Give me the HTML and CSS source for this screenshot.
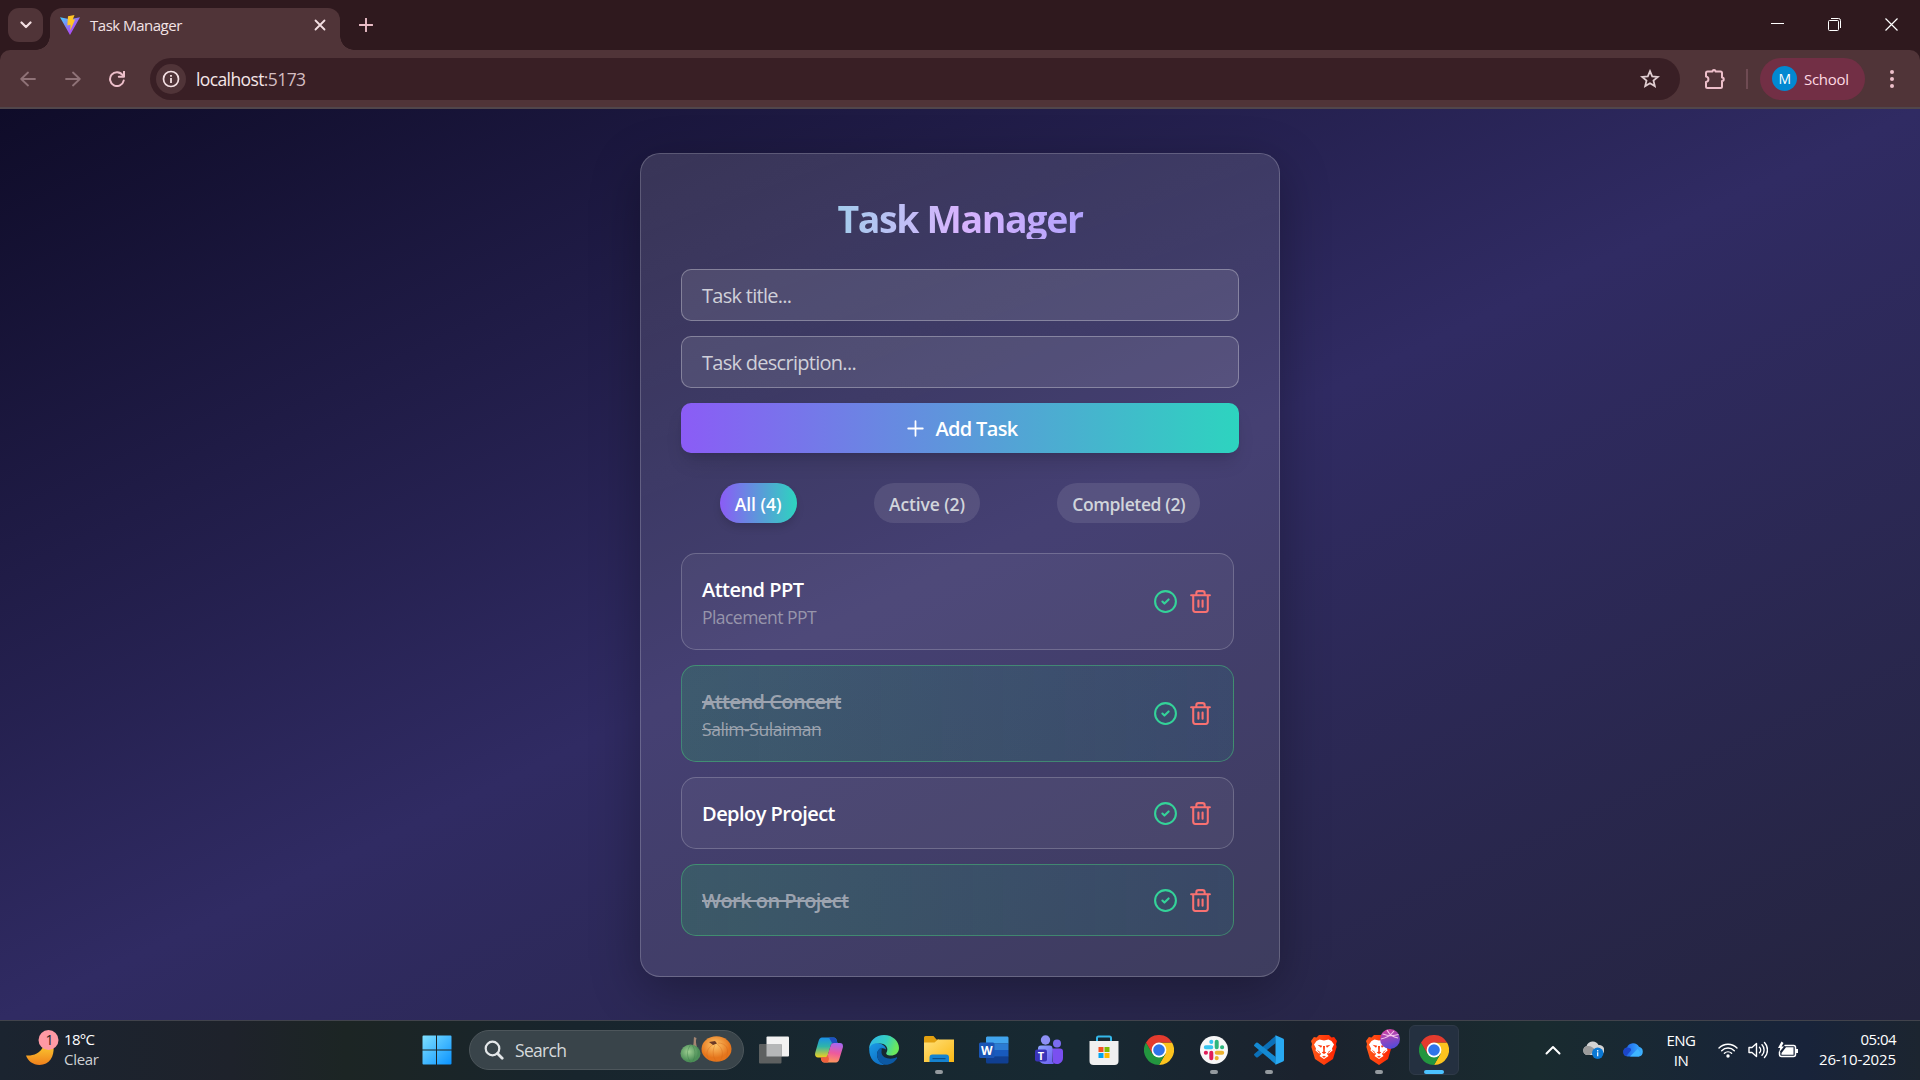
FILE: index.html
```html
<!DOCTYPE html>
<html lang="en">
<head>
<meta charset="utf-8">
<title>Task Manager</title>
<link rel="stylesheet" href="styles.css">
</head>
<body>
<svg width="0" height="0" class="defs">
  <defs>
    <linearGradient id="vite-a" x1="0" y1="0" x2="1" y2="1"><stop offset="0" stop-color="#41d1ff"/><stop offset=".6" stop-color="#a05cf5"/><stop offset="1" stop-color="#bd34fe"/></linearGradient>
    <linearGradient id="win" x1="0" y1="0" x2="1" y2="1"><stop offset="0" stop-color="#7fe0ff"/><stop offset="1" stop-color="#0a93ff"/></linearGradient>
    <linearGradient id="moon" x1="0" y1="0" x2="0" y2="1"><stop offset="0" stop-color="#f9c22e"/><stop offset="1" stop-color="#f0801c"/></linearGradient>
    <linearGradient id="cop-a" x1="0" y1="0" x2="0" y2="1"><stop offset="0" stop-color="#1a8fe8"/><stop offset=".45" stop-color="#2fb5a8"/><stop offset="1" stop-color="#f4d01c"/></linearGradient>
    <linearGradient id="cop-b" x1="0.6" y1="0" x2="0.4" y2="1"><stop offset="0" stop-color="#a767f0"/><stop offset=".5" stop-color="#ee5a9c"/><stop offset="1" stop-color="#ff9a5a"/></linearGradient>
    <linearGradient id="edge-a" x1="0" y1="0" x2="1" y2="0.3"><stop offset="0" stop-color="#2fb3ee"/><stop offset=".6" stop-color="#35cfc0"/><stop offset="1" stop-color="#6be85c"/></linearGradient>
    <linearGradient id="edge-b" x1="0" y1="0" x2="0.6" y2="1"><stop offset="0" stop-color="#1a9be6"/><stop offset="1" stop-color="#0f6fc4"/></linearGradient>
    <linearGradient id="folder" x1="0" y1="0" x2="1" y2="1"><stop offset="0" stop-color="#ffe07a"/><stop offset="1" stop-color="#fbb813"/></linearGradient>
    <linearGradient id="teams" x1="0" y1="0" x2="1" y2="1"><stop offset="0" stop-color="#8fa6ff"/><stop offset="1" stop-color="#6a5cf0"/></linearGradient>
    <linearGradient id="brave" x1="0" y1="0" x2="1" y2="0"><stop offset="0" stop-color="#ff5a1a"/><stop offset="1" stop-color="#ff2200"/></linearGradient>
    <linearGradient id="drib" x1="0" y1="0" x2="0.3" y2="1"><stop offset="0" stop-color="#e0409a"/><stop offset="1" stop-color="#5a4ad8"/></linearGradient>
    <linearGradient id="od" x1="0" y1="0" x2="1" y2="0"><stop offset="0" stop-color="#1f57e0"/><stop offset=".5" stop-color="#2a86f5"/><stop offset="1" stop-color="#3fb6ff"/></linearGradient>
    <radialGradient id="pump" cx=".45" cy=".35"><stop offset="0" stop-color="#ffc76a"/><stop offset="1" stop-color="#e5751c"/></radialGradient>
    <radialGradient id="gourd" cx=".4" cy=".4"><stop offset="0" stop-color="#9fcf92"/><stop offset="1" stop-color="#4d8f58"/></radialGradient>
    <symbol id="chrome" viewBox="0 0 30 30">
      <path d="M15 7.5H28A15 15 0 0 1 15 30l6.5-11.2Z" fill="#fcc31e"/>
      <path d="M8.500 18.800 2 7.500A15 15 0 0 0 15 30l6.500-11.200Z" fill="#23963f"/>
      <path d="M8.500 18.800 2 7.500A15 15 0 0 1 28 7.500H15Z" fill="#e33b2e"/>
      <circle cx="15" cy="15" r="7.400" fill="#fff"/><circle cx="15" cy="15" r="5.800" fill="#2f74ea"/>
    </symbol>
    <symbol id="lion" viewBox="0 0 26 30">
      <path d="M8 0h10l2.500 2.400 2.600-.3L26 6l-1 3 .6 3-3.600 12L13 30 4 24 .4 12 1 9 0 6l2.900-3.900 2.600.300Z" fill="url(#brave)"/>
      <path d="M13 5.500 17.500 4.500 20.500 6l2.500 3.500-2 4 .500 2-3.500 3-1.500-.500-.500 1 1.500 2-4.500 3-4.500-3 1.500-2-.500-1-1.500.500-3.500-3 .500-2-2-4L5.500 6l3-1.500Z" fill="#fff"/>
      <path d="m6.500 9.800 4.700 1-1.200 2Zm13 0-4.700 1 1.200 2ZM12 11h2l-.300 5.500 1.600 1L13 19l-2.300-1.500 1.600-1ZM5.500 14.500l3.500 2.500-.5 1Zm15 0L17 17l.5 1ZM11 21.800l2-1 2 1-2 1Z" fill="#ff3d10"/>
    </symbol>
    <symbol id="check" viewBox="0 0 24 24"><circle cx="12" cy="12" r="10"/><path d="m9 12 2 2 4-4"/></symbol>
    <symbol id="trash" viewBox="0 0 24 24"><path d="M3 6h18M19 6v14a2 2 0 0 1-2 2H7a2 2 0 0 1-2-2V6M8 6V4a2 2 0 0 1 2-2h4a2 2 0 0 1 2 2v2M10 11v6M14 11v6"/></symbol>
  </defs>
</svg>

<header class="browser">
  <div class="tabstrip">
    <div class="tab-search"><svg width="12" height="8" viewBox="0 0 12 8"><path d="m1.500 1.500 4.500 4.500 4.500-4.500" class="ln" stroke="#f3dfe2" stroke-width="2.200"/></svg></div>
    <div class="tab">
      <svg width="20" height="20" viewBox="0 0 20 20"><path d="M0 2.200 10 20 20 2.200 10 4.200Z" fill="url(#vite-a)"/><path d="m8 1.200 6.500-1.200-1.800 4.700 2.500-.4-5 11.500.4-6-3.300.700Z" fill="#ffc524"/></svg>
      <span class="tab-title">Task Manager</span>
      <svg width="12" height="12" viewBox="0 0 12 12"><path d="m1.500 1.500 9 9m0-9-9 9" class="ln" stroke="#f3dfe2" stroke-width="1.800"/></svg>
    </div>
    <svg class="new-tab" width="14" height="14" viewBox="0 0 14 14"><path d="M7 .5v13M.5 7h13" class="ln" stroke="#e9bcc6" stroke-width="1.900"/></svg>
    <div class="win-buttons">
      <svg width="13" height="13" viewBox="0 0 13 13"><path d="M0 5.500h13" stroke="#fff"/></svg>
      <svg width="13" height="13" viewBox="0 0 13 13"><path d="M3 .500h7.500a2 2 0 0 1 2 2V10" fill="none" stroke="#fff"/><rect x=".5" y="2.500" width="10" height="10" rx="1" fill="none" stroke="#fff"/></svg>
      <svg width="13" height="13" viewBox="0 0 13 13"><path d="m.5.5 12 12m0-12-12 12" stroke="#fff" stroke-width="1.200"/></svg>
    </div>
  </div>
  <div class="toolbar">
    <div class="nav">
      <svg width="16" height="16" viewBox="0 0 16 16"><path d="M15 8H1.500M8 1.500 1.200 8 8 14.500" class="ln" stroke="#8f7277" stroke-width="1.800"/></svg>
      <svg width="16" height="16" viewBox="0 0 16 16"><path d="M1 8h13.500M8 1.500l6.800 6.500L8 14.500" class="ln" stroke="#8f7277" stroke-width="1.800"/></svg>
      <svg width="16" height="16" viewBox="0 0 16 16"><path d="M13.500 4A6.900 6.900 0 1 0 14.700 9.600M15 .5v5.200H9.800" class="ln" stroke="#edbfca" stroke-width="2"/></svg>
    </div>
    <div class="omnibox">
      <div class="site-info"><svg width="18" height="18" viewBox="0 0 18 18"><circle cx="9" cy="9" r="7.500" class="ln" stroke="#f3dfe2" stroke-width="1.700"/><path d="M9 8v5M9 5v1.700" stroke="#f3dfe2" stroke-width="1.800"/></svg></div>
      <span class="url">localhost<i>:5173</i></span>
      <svg width="20" height="20" viewBox="0 0 20 20"><path d="m10 2.200 2.200 5.200 5.600.500-4.300 3.700 1.300 5.500L10 14.200l-4.800 2.900 1.300-5.500L2.200 7.900l5.600-.500Z" class="ln mit" stroke="#e0cdd1" stroke-width="1.800"/></svg>
    </div>
    <svg class="puzzle" width="22" height="22" viewBox="0 0 22 22"><path d="M3.500 3.500H8.500a1.500 1.500 0 0 1 3 0h5a1.500 1.500 0 0 1 1.500 1.500v4.500a1.500 1.500 0 0 1 0 3.500v5.500a1.500 1.500 0 0 1-1.500 1.500h-13A1.500 1.500 0 0 1 2 18.500v-4.500c3.200-.5 3.200-5 0-5.500V5a1.500 1.500 0 0 1 1.500-1.500Z" class="ln" stroke="#edbfca" stroke-width="2"/></svg>
    <div class="divider"></div>
    <div class="profile"><span class="avatar">M</span><span>School</span></div>
    <svg width="6" height="20" viewBox="0 0 6 20" fill="#edbfca"><circle cx="3" cy="3" r="2"/><circle cx="3" cy="10" r="2"/><circle cx="3" cy="17" r="2"/></svg>
  </div>
</header>

<main class="page">
  <section class="card">
    <h1>Task Manager</h1>
    <div class="field">Task title...</div>
    <div class="field">Task description...</div>
    <button class="add"><svg width="25" height="25" viewBox="0 0 24 24"><path d="M5 12h14M12 5v14" class="ln" stroke="#fff" stroke-width="1.700"/></svg><span>Add Task</span></button>
    <div class="filters">
      <span class="pill on">All (4)</span>
      <span class="pill active-f">Active (2)</span>
      <span class="pill done-f">Completed (2)</span>
    </div>
    <ul class="list">
      <li class="item"><div><b>Attend PPT</b><p>Placement PPT</p></div><svg class="ok"><use href="#check"/></svg><svg class="del"><use href="#trash"/></svg></li>
      <li class="item done"><div><b>Attend Concert</b><p>Salim-Sulaiman</p></div><svg class="ok"><use href="#check"/></svg><svg class="del"><use href="#trash"/></svg></li>
      <li class="item"><div><b>Deploy Project</b></div><svg class="ok"><use href="#check"/></svg><svg class="del"><use href="#trash"/></svg></li>
      <li class="item done"><div><b>Work on Project</b></div><svg class="ok"><use href="#check"/></svg><svg class="del"><use href="#trash"/></svg></li>
    </ul>
  </section>
</main>

<footer class="taskbar">
  <div class="weather">
    <svg width="34" height="38" viewBox="0 0 34 38"><path d="M1 26.500c7 .5 14-2 17-8.500h10.500c1 9-4 18-14 18C8 36 2.500 31.500 1 26.500Z" fill="url(#moon)"/><circle cx="23.500" cy="11" r="10" fill="#ff99a4"/><text x="20.500" y="16" class="badge-n">1</text></svg>
    <div class="two"><span class="temp">18°C</span><span class="cond">Clear</span></div>
  </div>
  <div class="apps">
    <div class="app start"><svg width="30" height="30" viewBox="0 0 30 30"><path d="M1.500.500H14v14H.500V1.500a1 1 0 0 1 1-1ZM15 .5h13.500a1 1 0 0 1 1 1v13H15ZM.5 15.500H14v14H1.500a1 1 0 0 1-1-1ZM15 15.500h14.500v13a1 1 0 0 1-1 1H15Z" fill="url(#win)"/></svg></div>
    <div class="search">
      <svg width="20" height="20" viewBox="0 0 20 20"><circle cx="8.500" cy="8.500" r="6.800" class="ln" stroke="#e4e7e9" stroke-width="2.200"/><path d="m13.500 13.500 4.700 4.700" class="ln" stroke="#e4e7e9" stroke-width="2.800"/></svg>
      <span>Search</span>
      <svg width="52" height="27" viewBox="0 0 52 27"><path d="M13 10c1-3 .5-6 1-9l2.500 1c-1 3-.5 6 .5 9Z" fill="#a58672"/><ellipse cx="10.500" cy="17.500" rx="10" ry="9" fill="url(#gourd)"/><path d="M10.500 9c-4 5-4 12 0 17M12 9c4 5 4 12 0 17" fill="none" stroke="#3c7f49" stroke-opacity=".4"/><ellipse cx="36.500" cy="13" rx="15" ry="12.700" fill="url(#pump)"/><path d="M34 8c-8 4-9 12-4 17M35 9c-3 6-2 12 1 16M37 8c6 4 7 11 3 17M38 7c8 0 12 6 8 15" fill="none" stroke="#cf641a" stroke-opacity=".35"/><path d="m29 6 6-1 2 2.500-4 1.500Z" fill="#6b3a26"/></svg>
    </div>
    <div class="app first"><svg width="30" height="28" viewBox="0 0 30 28"><rect x="7.500" y=".5" width="22.500" height="20" rx="1" fill="#f2f2f2"/><rect y="8" width="22.500" height="19.500" rx="1" fill="#5d6060"/><path d="M7.500 8h15v12.500h-15Z" fill="#b5b7b8"/></svg></div>
    <div class="app"><svg width="28" height="26" viewBox="0 0 28 26"><path d="M7 .5h11.500c2 0 2.800 1 3.300 3l.7 2.500h-3.500c-2 0-3 1-3.500 3l-2.600 9c-.6 2-1.500 2.500-3.500 2.500H3C.5 20.500-.5 18.500.3 15.500L3.600 4C4.300 1.700 5.300.5 7 .5Z" fill="url(#cop-a)"/><path d="M14 .5h4.500c2 0 2.800 1 3.300 3l.7 2.500H17Z" fill="#1f4fc0"/><path d="M21 25.500H9.500c-2 0-2.800-1-3.300-3l-.5-2h3.700c2 0 3-1 3.500-3l2.600-8.500c.6-2 1.500-3 3.500-3h6c2.500 0 3.500 2 2.700 5L24.400 22c-.7 2.300-1.700 3.500-3.400 3.500Z" fill="url(#cop-b)"/><path d="M5.700 20.500h3.700c2 0 3-1 3.500-3L14 22l-1 3.500H9.500c-2 0-2.800-1-3.300-3Z" fill="#f0603c"/></svg></div>
    <div class="app"><svg width="30" height="30" viewBox="0 0 30 30"><path d="M15 0c9 0 15 6.500 15 13 0 5-4 7.500-8 7.500s-5.500-1.500-4.500-3c2.500-4-.5-9-6.500-9C5 8.500 1 12 .2 14 0 6 7 0 15 0Z" fill="url(#edge-a)"/><path d="M.2 14C1 10 5 7.500 10 8.500c4 .8 7 3 7 6-4-3-9 0-9 5 0 5 3.500 9 8 10.300C7 31 0 24 .2 14Z" fill="url(#edge-b)"/><path d="M12.500 12.500c-3 1-4.500 4-4.500 7 0 5 3.500 9 8 10.300 5 .3 9.500-2.300 12-6.300.5-1-.3-1.500-1-1-5 2.500-14 1-14.500-5-.1-2 .5-3.500 0-5Z" fill="#0c59a4"/></svg></div>
    <div class="app run"><svg width="30" height="27" viewBox="0 0 30 27"><path d="M1.500 0h8l3 3.500H15V8H0V1.500A1.500 1.500 0 0 1 1.500 0Z" fill="#e2a010"/><path d="M0 6.500h10.500L14 3.500h16V26H0Z" fill="url(#folder)"/><path d="M5.500 26v-4.500a3 3 0 0 1 3-3h13.500a3 3 0 0 1 3 3V26Z" fill="#1583d0"/><rect x="8.500" y="22" width="13" height="1.200" fill="#0b4f8a"/></svg></div>
    <div class="app"><svg width="30" height="28" viewBox="0 0 30 28"><path d="M8 .5h20.500A1.500 1.500 0 0 1 29.500 2v5.500H7v-6Z" fill="#41a5ee"/><path d="M7 7.300h22.500V14H7Z" fill="#2b7cd3"/><path d="M7 14h22.500v6.800H7Z" fill="#185abd"/><path d="M7 20.800h22.500v5.200a1.500 1.500 0 0 1-1.500 1.500H8.500A1.500 1.500 0 0 1 7 26Z" fill="#103f91"/><rect y="6.500" width="15.500" height="15.500" rx="1.500" fill="#1a55b5"/><text x="2" y="18.600" class="glyph">W</text></svg></div>
    <div class="app"><svg width="28" height="30" viewBox="0 0 28 30"><circle cx="10.500" cy="5" r="4.700" fill="#8e90f5"/><circle cx="22" cy="8.500" r="4" fill="#7b6cf0"/><path d="M17 13.500h8a3 3 0 0 1 3 3V23a6 6 0 0 1-10 4.500Z" fill="#7a4ff0"/><path d="M6 10.500h8.500a3 3 0 0 1 3 3V25a4 4 0 0 0 1.500 4H10a7 7 0 0 1-7-7v-8.500a3 3 0 0 1 3-3Z" fill="url(#teams)"/><rect y="14.500" width="12" height="12" rx="2" fill="#3a33b8"/><text x="2.800" y="24.600" class="glyph sm">T</text></svg></div>
    <div class="app"><svg width="30" height="30" viewBox="0 0 30 30"><path d="M8 7V3a1.500 1.500 0 0 1 1.500-1.500h11A1.500 1.500 0 0 1 22 3v4" fill="none" stroke="#35b8ea" stroke-width="2"/><path d="M.5 6h29v20a4 4 0 0 1-4 4h-21a4 4 0 0 1-4-4Z" fill="#f0f0f0"/><path d="M9.500 12h5v5h-5Z" fill="#f25022"/><path d="M15.500 12h5v5h-5Z" fill="#7fba00"/><path d="M9.500 18h5v5h-5Z" fill="#00a4ef"/><path d="M15.500 18h5v5h-5Z" fill="#ffb900"/></svg></div>
    <div class="app"><svg width="30" height="30"><use href="#chrome"/></svg></div>
    <div class="app run"><svg width="28" height="28" viewBox="0 0 28 28"><circle cx="14" cy="14" r="14" fill="#f7f7f7"/><g stroke-width="4" stroke-linecap="round"><path d="M11.300 5.800v.2M5.800 11.300H11.300" stroke="#36c5f0"/><path d="M16.700 5.800v5.500M22 11.300h.2" stroke="#2eb67d"/><path d="M16.700 16.700h5.500M16.700 22v.2" stroke="#ecb22e"/><path d="M11.300 16.700v5.500M5.800 16.700h.2" stroke="#e01e5a"/></g></svg></div>
    <div class="app run"><svg width="30" height="30" viewBox="0 0 30 30"><path d="M21.500 8.300 3.800 22.200a1.300 1.300 0 0 1-1.700 0L.5 20.600a1.200 1.200 0 0 1 0-1.800L22 .5Z" fill="#0b70b8"/><path d="M21.500 21.700 3.800 7.800a1.300 1.300 0 0 0-1.700 0L.5 9.400a1.200 1.200 0 0 0 0 1.800L22 29.500Z" fill="#1489d2"/><path d="M21.500.3 29 3.600a1.700 1.700 0 0 1 1 1.600v19.600a1.700 1.700 0 0 1-1 1.600l-7.500 3.300Z" fill="#28a9f2"/></svg></div>
    <div class="app"><svg width="26" height="30"><use href="#lion"/></svg></div>
    <div class="app run"><svg width="26" height="30"><use href="#lion"/></svg><svg class="overlay" width="20" height="20" viewBox="0 0 20 20"><circle cx="10" cy="10" r="10" fill="url(#drib)"/><path d="M2.500 5c6 2 11 2 16 .5M7 1c2 4 5 7 11 8M1 10c5-1 10-4 13-8" fill="none" stroke="#f6c3ea" stroke-width="1.200"/></svg></div>
    <div class="app run current"><svg width="30" height="30"><use href="#chrome"/></svg></div>
  </div>
  <div class="tray">
    <svg width="16" height="10" viewBox="0 0 16 10"><path d="m1.500 8.500 6.500-6.500 6.500 6.500" class="ln" stroke="#fff" stroke-width="2"/></svg>
    <svg class="cloud" width="21" height="18" viewBox="0 0 21 18"><path d="M4.500 14A4.500 4.500 0 0 1 3.500 5.200 6.500 6.500 0 0 1 15.500 4 5 5 0 0 1 17 14Z" fill="#d4d4d4"/><path d="M3.500 5.200c4-1 6 1 9.500 4L6.500 14h-2A4.500 4.500 0 0 1 3.500 5.200Z" fill="#9b9b9b"/><circle cx="14.700" cy="12.200" r="5.700" fill="#0a78d4"/><path d="M14.700 11.200v4M14.700 9v1.400" stroke="#fff" stroke-width="1.200"/></svg>
    <svg class="onedrive" width="20" height="14" viewBox="0 0 20 14"><path d="M4.500 13.500A4.500 4.500 0 0 1 4 4.600a6.500 6.500 0 0 1 12-.8 5 5 0 0 1 0 9.700Z" fill="url(#od)"/><path d="M4 4.600c3 0 4.500 1 4 3L3 13.200A4.500 4.500 0 0 1 4 4.600Z" fill="#1c46c8"/><path d="M7 13.500 14.500 6A5 5 0 0 1 16 13.500Z" fill="#3fb6ff"/></svg>
    <div class="two lang"><span>ENG</span><span>IN</span></div>
    <div class="status">
      <svg width="20" height="16" viewBox="0 0 20 16"><path d="M1 6a12.600 12.600 0 0 1 18 0M3.700 8.700a8.800 8.800 0 0 1 12.600 0M6.400 11.300a5.200 5.200 0 0 1 7.200 0" class="ln" stroke="#fff" stroke-width="1.400"/><circle cx="10" cy="14" r="1.700" fill="#fff"/></svg>
      <svg width="20" height="18" viewBox="0 0 20 18"><path d="M1 6.500h3l4.500-4v13l-4.500-4H1ZM11.500 6.200a4 4 0 0 1 0 5.600M14 3.800a7.500 7.500 0 0 1 0 10.400M16.500 1.500a11 11 0 0 1 0 15" class="ln" stroke="#fff" stroke-width="1.400"/></svg>
      <svg width="20" height="18" viewBox="0 0 20 18"><path d="M7 4.500h8.500a2 2 0 0 1 2 2v7a2 2 0 0 1-2 2H3.500a2 2 0 0 1-2-2V11" class="ln" stroke="#fff" stroke-width="1.500"/><path d="M8 6.300h7.500v7.400H3.500V12ZM18 8h2v4h-2ZM3.500.500 0 7h2.200L1 11.500 6 5.500H3.600L5.500 2Z" fill="#fff"/></svg>
    </div>
    <div class="two clock"><span class="time">05:04</span><span>26-10-2025</span></div>
  </div>
</footer>
</body>
</html>
```
FILE: styles.css
```css
*{box-sizing:border-box;margin:0;padding:0}
body{width:1920px;height:1080px;overflow:hidden;display:flex;flex-direction:column;font-family:"Open Sans","Noto Sans",sans-serif;background:#2f191e}
svg{display:block;flex:none}
.defs{position:absolute}
.ln{fill:none;stroke-linecap:round;stroke-linejoin:round}
.mit{stroke-linejoin:miter}

/* browser chrome */
.browser{height:109px;flex:none}
.tabstrip{height:50px;display:flex;align-items:flex-start;padding-left:8px}
.tab-search{width:35px;height:34px;margin:8px 7px 0 0;border-radius:11px;background:#503438;display:flex;align-items:center;justify-content:center}
.tab{position:relative;width:290px;height:42.500px;margin-top:7.500px;padding:0 14px 7px 10px;border-radius:12px 12px 0 0;background:#503438;display:flex;align-items:center;color:#f3e3e5;font-size:15px}
.tab::before,.tab::after{content:"";position:absolute;bottom:0;width:14px;height:14px}
.tab::before{left:-14px;background:radial-gradient(circle at 0 0,transparent 13.500px,#503438 14px)}
.tab::after{right:-14px;background:radial-gradient(circle at 100% 0,transparent 13.500px,#503438 14px)}
.tab-title{flex:1;margin-left:10px;letter-spacing:-.48px}
.new-tab{margin:18px 0 0 19px}
.win-buttons{display:flex;gap:44px;margin:18px 22px 0 auto}
.toolbar{height:59px;padding:7px 25px 7px 20px;border-bottom:2px solid #51464b;border-radius:10px 10px 0 0;background:#503438;display:flex;align-items:center}
.nav{display:flex;gap:28.500px;width:130px}
.omnibox{width:1531px;height:42px;padding:0 20px 0 6px;border-radius:21px;background:#391f25;display:flex;align-items:center}
.site-info{width:30px;height:30px;border-radius:50%;background:#503438;display:flex;align-items:center;justify-content:center}
.url{flex:1;margin-left:10px;font-size:17.500px;letter-spacing:-.6px;color:#f5e6e8}
.url i{font-style:normal;color:#d3bcc0}
.puzzle{margin-left:24px}
.divider{width:2px;height:20px;margin:0 12px 0 20px;background:#6f4b53}
.profile{width:105px;height:42px;padding-left:12px;border-radius:21px;background:#722f45;display:flex;align-items:center;gap:7px;color:#ffd9e2;font-size:15px;letter-spacing:-.3px;margin-right:24px}
.avatar{width:25px;height:25px;border-radius:50%;background:#0288d1;color:#fff;font-size:14px;line-height:25px;text-align:center}

/* page */
.page{flex:1;padding-top:44px;background:linear-gradient(to bottom right,#0f0c29,#302b63,#24243e);display:flex;justify-content:center;align-items:flex-start}
.card{width:640px;height:824px;padding:40px;border:1px solid rgba(255,255,255,.2);border-radius:20px;background:linear-gradient(160deg,rgba(255,255,255,.13),rgba(255,255,255,.1) 35%,rgba(255,255,255,.1));box-shadow:0 14px 50px rgba(0,0,0,.3)}
h1{height:45px;margin-bottom:30px;padding-top:2px;line-height:46px;font-size:37.500px;font-weight:700;letter-spacing:-1.380px;text-align:center;color:transparent;background:linear-gradient(to right,#5eead4,#d8b4fe,#818cf8);-webkit-background-clip:text;background-clip:text}
.field{height:52px;margin-bottom:15px;padding:1px 0 0 20px;border:1px solid rgba(255,255,255,.3);border-radius:10px;background:rgba(255,255,255,.1);color:#cfd0d9;font-size:20px;line-height:50px;letter-spacing:-.72px}
.add{width:100%;height:50px;border:0;border-radius:10px;background:linear-gradient(to right,#8b5cf6,#2dd4bf);box-shadow:0 12px 19px -4px rgba(0,0,0,.13),0 5px 8px -5px rgba(0,0,0,.12);display:flex;align-items:center;justify-content:center;gap:8px;color:#fff;font:600 20px "Open Sans",sans-serif;letter-spacing:-.68px}
.add span{padding-top:1px}
.filters{display:flex;justify-content:space-around;margin:30px 0}
.pill{height:40px;padding:2px 15px 0;border-radius:20px;background:rgba(255,255,255,.1);color:#d1d5db;font-size:17.500px;font-weight:600;line-height:39px}
.on{color:#fff;background:linear-gradient(to right,#8b5cf6,#2dd4bf);box-shadow:0 5px 8px -1px rgba(0,0,0,.15)}
.active-f{letter-spacing:-.12px}
.done-f{letter-spacing:-.37px}
.list{list-style:none;margin-right:5px;display:grid;gap:15px}
.item{padding:21px 20px 19px;border:1px solid rgba(255,255,255,.2);border-radius:15px;background:rgba(255,255,255,.05);display:flex;align-items:center;gap:10px}
.item div{flex:1}
.item b{display:block;font-size:20px;line-height:30px;font-weight:600;letter-spacing:-.53px;color:#fff}
.item p{font-size:17.500px;line-height:25px;letter-spacing:-.55px;color:#9795ab}
.done{border-color:rgba(74,222,128,.4);background:linear-gradient(to right,rgba(34,197,94,.2),rgba(20,150,136,.13))}
.done b,.done p{color:#9ca3af;text-decoration:line-through}
.done p{letter-spacing:-.45px}
.item svg{width:25px;height:25px;margin-top:-2px;fill:none;stroke-width:2;stroke-linecap:round;stroke-linejoin:round}
.ok{stroke:#34d399}
.del{stroke:#f87171}

/* taskbar */
.taskbar{height:60px;flex:none;padding-bottom:2px;border-top:1px solid #41434c;background:linear-gradient(to right,#1b2430,#1e222b 12%,#1c2524 18%,#18252d 30%,#172932 56%,#1b222e 68%,#192b2f 80%,#18233a 94%,#1c2530);display:flex;align-items:center;position:relative;color:#fff;font-size:15px}
.two{display:flex;flex-direction:column;line-height:20px}
.weather{width:409.500px;padding-left:25px;display:flex;align-items:center;gap:5px}
.weather svg{margin-top:-3px}
.weather .two{margin-top:-2px}
.badge-n{font-size:14px;fill:#222}
.temp{letter-spacing:-.7px}
.cond{letter-spacing:-.3px;color:#ced1d4}
.apps{display:flex;align-items:center}
.app{position:relative;width:55px;height:50px;display:flex;align-items:center;justify-content:center}
.start{margin-right:4.500px}
.first{margin-left:2px}
.search{width:275px;height:40px;padding:0 11px 0 14px;border:1px solid #4d565b;border-radius:20px;background:#39444a;display:flex;align-items:center;color:#d5d9db;font-size:17.500px;letter-spacing:-.68px}
.search span{flex:1;margin-left:11px}
.run::after{content:"";position:absolute;bottom:1px;left:23.500px;width:8px;height:4px;border-radius:2px;background:#949a9f}
.current{width:50px;margin-left:2.500px;border:1px solid #2f3a48;border-radius:6px;background:#243040}
.current::after{left:14px;bottom:0;width:20px;background:#4cc2ff}
.overlay{position:absolute;right:6px;top:4px}
.glyph{font:700 12px "Open Sans",sans-serif;fill:#fff}
.sm{font-size:11px}
.tray{margin-left:auto;padding-right:24px;display:flex;align-items:center}
.cloud{margin-left:22px}
.onedrive{margin-left:19px}
.lang{width:30px;margin-left:23px;text-align:center;letter-spacing:-.5px}
.status{display:flex;align-items:center;gap:10px;margin-left:22px}
.clock{width:78px;margin-left:20px;margin-top:-2px;text-align:right;letter-spacing:-.12px}
.time{letter-spacing:-.55px}
```
